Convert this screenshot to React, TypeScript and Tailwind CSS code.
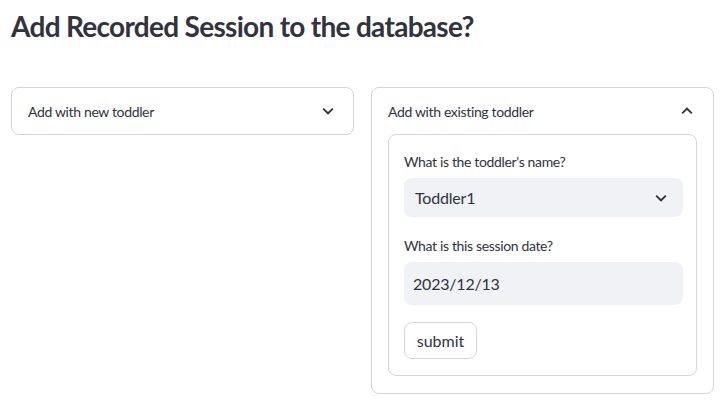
import React from 'react';

const Chevron = ({ up = false }: { up?: boolean }) => (
  <svg width="22" height="22" viewBox="0 0 24 24" className="text-[#31333F]">
    <path
      d={up ? 'M7.4 15.4 12 10.8l4.6 4.6L18 14l-6-6-6 6z' : 'M7.4 8.6 12 13.2l4.6-4.6L18 10l-6 6-6-6z'}
      fill="currentColor"
    />
  </svg>
);

export default function App() {
  return (
    <div
      className="w-[728px] h-[412px] bg-white text-[#31333F] pl-[11px] pr-[14px]"
      style={{ fontFamily: 'Lato, "Noto Sans", sans-serif' }}
    >
      <h1 className="text-[28px] font-bold leading-[36px] pt-[8px] tracking-[-0.7px]">
        Add Recorded Session to the database?
      </h1>

      <div className="grid grid-cols-2 gap-[17px] mt-[43px] items-start">
        <div className="border border-[#d6d6d9] rounded-lg">
          <div className="h-[46px] flex items-center justify-between pl-[16px] pr-[14px]">
            <span className="text-[14px] tracking-[-0.35px]">Add with new toddler</span>
            <Chevron />
          </div>
        </div>

        <div className="border border-[#d6d6d9] rounded-lg pb-[17px]">
          <div className="h-[46px] flex items-center justify-between pl-[16px] pr-[15px]">
            <span className="text-[14px] tracking-[-0.35px]">Add with existing toddler</span>
            <Chevron up />
          </div>
          <div className="mx-[16px] border border-[#d6d6d9] rounded-lg pl-[15px] pr-[13px] pt-[17px] pb-[16px]">
            <div className="text-[14px] leading-[20px] tracking-[-0.35px]">What is the toddler's name?</div>
            <div className="mt-[6px] h-[39px] bg-[#f0f2f6] rounded-lg flex items-center justify-between pl-[11px] pr-[11px]">
              <span className="text-[16px] tracking-[-0.2px]">Toddler1</span>
              <Chevron />
            </div>

            <div className="text-[14px] leading-[20px] mt-[19px] tracking-[-0.35px]">What is this session date?</div>
            <div className="mt-[6px] h-[43px] bg-[#f0f2f6] rounded-lg flex items-center pl-[9px]">
              <span className="text-[16px] tracking-[-0.2px]">2023/12/13</span>
            </div>

            <button className="mt-[17px] h-[37px] w-[73px] border border-[#d6d6d9] rounded-lg bg-white text-[16px] text-[#31333F]">
              submit
            </button>
          </div>
        </div>
      </div>
    </div>
  );
}
